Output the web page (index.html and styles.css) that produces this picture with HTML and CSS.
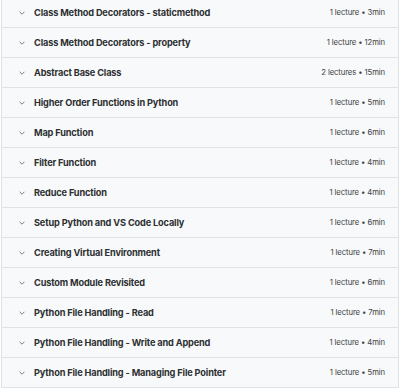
FILE: index.html
```html
<!DOCTYPE html>
<html>
<head>
<meta charset="utf-8">
<link rel="stylesheet" href="styles.css">
</head>
<body>
<div class="curriculum">
  <div class="section"><span class="chev"><svg viewBox="0 0 10 6" width="6" height="4"><path d="M1 1l4 4 4-4" fill="none" stroke="#4a4d50" stroke-width="1.2"/></svg></span><span class="title">Class Method Decorators - staticmethod</span><span class="meta">1 lecture • 3min</span></div>
  <div class="section"><span class="chev"><svg viewBox="0 0 10 6" width="6" height="4"><path d="M1 1l4 4 4-4" fill="none" stroke="#4a4d50" stroke-width="1.2"/></svg></span><span class="title">Class Method Decorators - property</span><span class="meta">1 lecture • 12min</span></div>
  <div class="section"><span class="chev"><svg viewBox="0 0 10 6" width="6" height="4"><path d="M1 1l4 4 4-4" fill="none" stroke="#4a4d50" stroke-width="1.2"/></svg></span><span class="title">Abstract Base Class</span><span class="meta">2 lectures • 15min</span></div>
  <div class="section"><span class="chev"><svg viewBox="0 0 10 6" width="6" height="4"><path d="M1 1l4 4 4-4" fill="none" stroke="#4a4d50" stroke-width="1.2"/></svg></span><span class="title">Higher Order Functions in Python</span><span class="meta">1 lecture • 5min</span></div>
  <div class="section"><span class="chev"><svg viewBox="0 0 10 6" width="6" height="4"><path d="M1 1l4 4 4-4" fill="none" stroke="#4a4d50" stroke-width="1.2"/></svg></span><span class="title">Map Function</span><span class="meta">1 lecture • 6min</span></div>
  <div class="section"><span class="chev"><svg viewBox="0 0 10 6" width="6" height="4"><path d="M1 1l4 4 4-4" fill="none" stroke="#4a4d50" stroke-width="1.2"/></svg></span><span class="title">Filter Function</span><span class="meta">1 lecture • 4min</span></div>
  <div class="section"><span class="chev"><svg viewBox="0 0 10 6" width="6" height="4"><path d="M1 1l4 4 4-4" fill="none" stroke="#4a4d50" stroke-width="1.2"/></svg></span><span class="title">Reduce Function</span><span class="meta">1 lecture • 4min</span></div>
  <div class="section"><span class="chev"><svg viewBox="0 0 10 6" width="6" height="4"><path d="M1 1l4 4 4-4" fill="none" stroke="#4a4d50" stroke-width="1.2"/></svg></span><span class="title">Setup Python and VS Code Locally</span><span class="meta">1 lecture • 6min</span></div>
  <div class="section"><span class="chev"><svg viewBox="0 0 10 6" width="6" height="4"><path d="M1 1l4 4 4-4" fill="none" stroke="#4a4d50" stroke-width="1.2"/></svg></span><span class="title">Creating Virtual Environment</span><span class="meta">1 lecture • 7min</span></div>
  <div class="section"><span class="chev"><svg viewBox="0 0 10 6" width="6" height="4"><path d="M1 1l4 4 4-4" fill="none" stroke="#4a4d50" stroke-width="1.2"/></svg></span><span class="title">Custom Module Revisited</span><span class="meta">1 lecture • 6min</span></div>
  <div class="section"><span class="chev"><svg viewBox="0 0 10 6" width="6" height="4"><path d="M1 1l4 4 4-4" fill="none" stroke="#4a4d50" stroke-width="1.2"/></svg></span><span class="title">Python File Handling - Read</span><span class="meta">1 lecture • 7min</span></div>
  <div class="section"><span class="chev"><svg viewBox="0 0 10 6" width="6" height="4"><path d="M1 1l4 4 4-4" fill="none" stroke="#4a4d50" stroke-width="1.2"/></svg></span><span class="title">Python File Handling - Write and Append</span><span class="meta">1 lecture • 4min</span></div>
  <div class="section"><span class="chev"><svg viewBox="0 0 10 6" width="6" height="4"><path d="M1 1l4 4 4-4" fill="none" stroke="#4a4d50" stroke-width="1.2"/></svg></span><span class="title">Python File Handling - Managing File Pointer</span><span class="meta">1 lecture • 5min</span></div>
</div>
</body>
</html>
```

FILE: styles.css
```css
html, body {
  margin: 0;
  padding: 0;
  background: #ffffff;
}
.curriculum {
  margin: -2px 1px 0 1px;
  border-left: 1px solid #dfe3e6;
  border-right: 1px solid #dfe3e6;
  font-family: Inter, "Liberation Sans", sans-serif;
  color: #2d2f31;
}
.section {
  display: flex;
  align-items: center;
  height: 29px;
  border-bottom: 1px solid #dfe3e6;
  background: #f7f9fa;
  padding: 0 13px 0 17px;
}
.chev {
  display: flex;
  width: 15px;
  flex: none;
}
.title {
  flex: 1;
  font-size: 9.2px;
  font-weight: 700;
  letter-spacing: -0.15px;
}
.meta {
  font-size: 7.7px;
  color: #3e4143;
  letter-spacing: -0.1px;
}
```
